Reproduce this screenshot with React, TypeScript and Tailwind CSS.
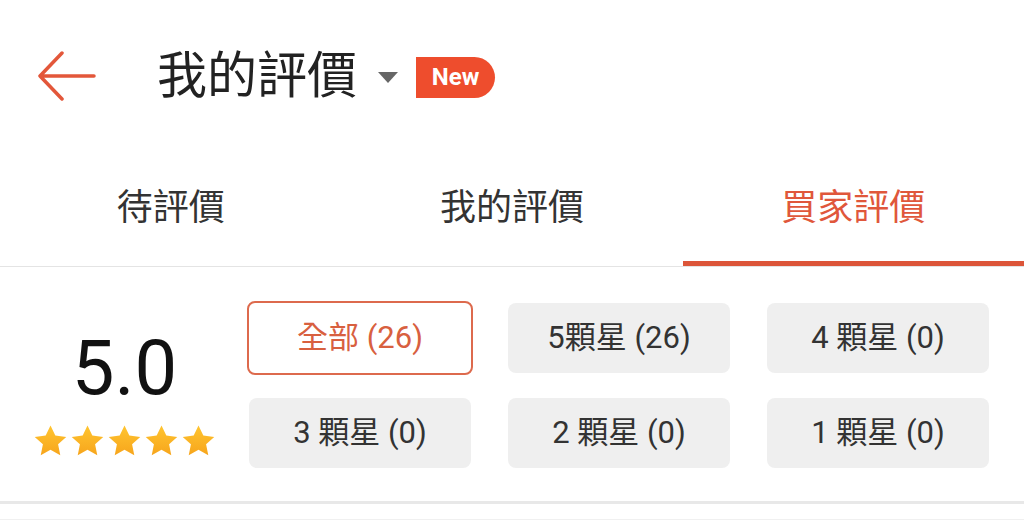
import React, { useState } from 'react';

const ORANGE = '#ee4d2d';

const filters = [
  { key: 'all', label: '全部 (26)' },
  { key: '5', label: '5顆星 (26)' },
  { key: '4', label: '4 顆星 (0)' },
  { key: '3', label: '3 顆星 (0)' },
  { key: '2', label: '2 顆星 (0)' },
  { key: '1', label: '1 顆星 (0)' },
];

const tabs = ['待評價', '我的評價', '買家評價'];

function Star() {
  return (
    <svg width="35" height="34" viewBox="0 0 24 23">
      <defs>
        <linearGradient id="starFill" x1="0" y1="0" x2="0" y2="1">
          <stop offset="0%" stopColor="#ffc530" />
          <stop offset="100%" stopColor="#f7a51c" />
        </linearGradient>
      </defs>
      <path
        d="M12 0.8l3.3 7 7.5 0.9-5.6 5.1 1.5 7.5L12 17.5l-6.7 3.8 1.5-7.5L1.2 8.7l7.5-0.9z"
        fill="url(#starFill)"
      />
    </svg>
  );
}

export default function App() {
  const [activeTab, setActiveTab] = useState(2);
  const [filter, setFilter] = useState('all');

  return (
    <div
      className="w-[1024px] h-[522px] overflow-hidden bg-white text-[#333]"
      style={{ fontFamily: 'Roboto, "Noto Sans CJK TC", sans-serif' }}
    >
      {/* header */}
      <div className="h-[152px] flex items-center pl-[38px]">
        <svg width="58" height="50" viewBox="0 0 58 50" className="shrink-0">
          <path
            d="M56 25H2M24 2L2 25l22 23"
            fill="none"
            stroke="#e3573a"
            strokeWidth="3.5"
            strokeLinecap="round"
            strokeLinejoin="round"
          />
        </svg>
        <h1 className="ml-[61px] text-[50px] leading-none text-[#222] font-normal">我的評價</h1>
        <svg width="20" height="11" viewBox="0 0 20 11" className="ml-[21px] mt-[2px]">
          <path d="M0 0h20L10 11z" fill="#666" />
        </svg>
        <span
          className="ml-[18px] h-[41px] w-[79px] flex items-center justify-center text-white text-[24px] font-bold rounded-tl-[22px] rounded-bl-[3px] rounded-r-full mb-[-2px]"
          style={{ backgroundColor: ORANGE }}
        >
          New
        </span>
      </div>

      {/* tabs */}
      <div className="grid grid-cols-3 border-b border-[#e4e4e4]">
        {tabs.map((t, i) => (
          <button
            key={t}
            onClick={() => setActiveTab(i)}
            className={`h-[114px] flex items-center justify-center text-[36px] pt-[2px] border-b-[5px] ${
              i === activeTab ? 'text-[#e0573b] border-[#dc5539]' : 'text-[#333] border-transparent'
            }`}
          >
            {t}
          </button>
        ))}
      </div>

      {/* rating summary */}
      <div className="flex items-start pt-[36px] pb-[33px]">
        <div className="w-[249px] shrink-0 flex flex-col items-center pt-[27px]">
          <div className="text-[76px] leading-none text-[#111]">5.0</div>
          <div className="flex gap-[2px] mt-[18px]">
            {[0, 1, 2, 3, 4].map(i => (
              <Star key={i} />
            ))}
          </div>
        </div>
        <div className="grid grid-cols-[222px_222px_222px] gap-x-[37px] gap-y-[25px]">
          {filters.map(f => {
            const active = f.key === filter;
            return (
              <button
                key={f.key}
                onClick={() => setFilter(f.key)}
                className={`h-[70px] rounded-[8px] flex items-center justify-center text-[31px] ${
                  active
                    ? '-m-[2px] h-[74px] border-2 border-[#dd6a4d] bg-white text-[#d8603f]'
                    : 'bg-[#efefef] text-[#333]'
                }`}
              >
                {f.label}
              </button>
            );
          })}
        </div>
      </div>

      <div className="h-[3px] bg-[#e8e8e8]" />
      <div className="h-[16px] bg-white border-b border-[#f0f0f0]" />
    </div>
  );
}
